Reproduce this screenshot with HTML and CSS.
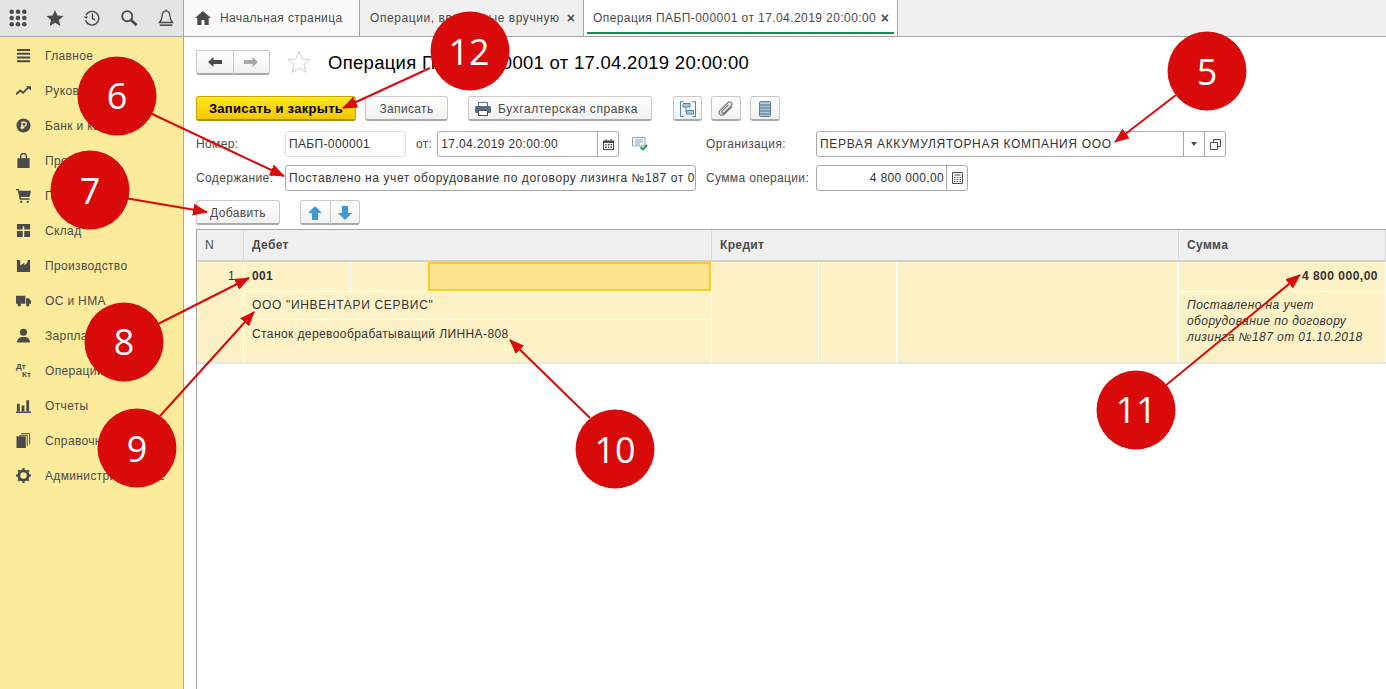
FILE: index.html
```html
<!DOCTYPE html>
<html lang="ru">
<head>
    <meta charset="UTF-8">
    <title>Операция ПАБП-000001</title>
    <link rel="stylesheet" href="styles.css">
</head>
<body>
    <div class="topbar">
        <div class="quick-panel">
            <svg class="quick-icon" width="18" height="18" viewBox="0 0 20 20" fill="#4a4a4a"><circle cx="3" cy="3" r="2.5"/><circle cx="10" cy="3" r="2.5"/><circle cx="17" cy="3" r="2.5"/><circle cx="3" cy="10" r="2.5"/><circle cx="10" cy="10" r="2.5"/><circle cx="17" cy="10" r="2.5"/><circle cx="3" cy="17" r="2.5"/><circle cx="10" cy="17" r="2.5"/><circle cx="17" cy="17" r="2.5"/></svg>
            <svg class="quick-icon" width="18" height="18" viewBox="0 0 20 20" fill="#4a4a4a"><path d="M10 1l2.700 6.200 6.800.6-5.100 4.500 1.500 6.700L10 15.400 4.100 19l1.500-6.700L.5 7.800l6.800-.6z"/></svg>
            <svg class="quick-icon" width="18" height="18" viewBox="0 0 20 20" fill="none" stroke="#4a4a4a" stroke-width="1.600"><path d="M3.200 7a7.600 7.600 0 1 1-.4 5.500"/><path d="M10.500 5v5.500l3 2"/><path d="M.6 8.200h5L3.600 11z" fill="#4a4a4a" stroke="none"/></svg>
            <svg class="quick-icon" width="18" height="18" viewBox="0 0 20 20" fill="none" stroke="#4a4a4a"><circle cx="8" cy="8" r="5.600" stroke-width="2"/><path d="M12 12l6.500 6" stroke-width="3"/></svg>
            <svg class="quick-icon" width="18" height="18" viewBox="0 0 20 20" fill="none" stroke="#4a4a4a" stroke-width="1.500"><path d="M10 2c-3.600 0-4.200 3-4.400 6-.2 3-1 5-2.800 7h14.400c-1.800-2-2.600-4-2.800-7-.2-3-.8-6-4.400-6z"/><path d="M3 18h14" stroke-width="1.800"/><circle cx="10" cy="1.500" r="1" fill="#4a4a4a" stroke="none"/></svg>
        </div>
        <div class="tab tab-home">
            <svg width="16" height="14" viewBox="0 0 16 14" fill="#4a4a4a"><path d="M8 0l8 7h-2.300v7H9.500V9h-3v5H2.300V7H0z"/></svg>
            <span>Начальная страница</span>
        </div>
        <div class="tab tab-list">
            <span>Операции, введенные вручную</span>
            <span class="tab-close">×</span>
        </div>
        <div class="tab tab-active">
            <span>Операция ПАБП-000001 от 17.04.2019 20:00:00</span>
            <span class="tab-close">×</span>
        </div>
    </div>

    <div class="workspace">
        <nav class="sidebar">
            <div class="nav-item">
                <svg viewBox="0 0 16 16" fill="#4a4a4a"><path d="M1 1h14v2.200H1zM1 5h14v2.200H1zM1 9h14v2.200H1zM1 13h14v2.200H1z"/></svg>
                <span>Главное</span>
            </div>
            <div class="nav-item">
                <svg viewBox="0 0 16 16" fill="none" stroke="#4a4a4a" stroke-width="2"><path d="M0 12l4.500-4 3 2.500L13 5"/><path d="M10.500 3.500H16V8z" stroke="none" fill="#4a4a4a"/></svg>
                <span>Руководителю</span>
            </div>
            <div class="nav-item">
                <svg viewBox="0 0 16 16"><circle cx="8" cy="8" r="7.500" fill="#4a4a4a"/><path d="M6.500 12V4.500h2.400a2 2 0 0 1 0 4.200H5M5 10.400h4" fill="none" stroke="#fbeb9b" stroke-width="1.400"/></svg>
                <span>Банк и касса</span>
            </div>
            <div class="nav-item">
                <svg viewBox="0 0 16 16" fill="#4a4a4a"><path d="M1.500 5.500h13V16h-13z"/><path d="M5 7V3.500a3 3 0 0 1 6 0V7" fill="none" stroke="#4a4a4a" stroke-width="1.500"/></svg>
                <span>Продажи</span>
            </div>
            <div class="nav-item">
                <svg viewBox="0 0 16 16" fill="#4a4a4a"><path d="M0 1h3l.6 2H16l-1.600 6.500H5l.4 1.500h9v1.500H4L1.900 2.500H0z"/><circle cx="5.500" cy="14.800" r="1.200"/><circle cx="12.500" cy="14.800" r="1.200"/></svg>
                <span>Покупки</span>
            </div>
            <div class="nav-item">
                <svg viewBox="0 0 16 16" fill="#4a4a4a"><path d="M1 1h14v6H8.800V3.500H7.200V7H1zM1 8.500h6.200V15H1zM8.800 8.500H15V15H8.800z"/></svg>
                <span>Склад</span>
            </div>
            <div class="nav-item">
                <svg viewBox="0 0 16 16" fill="#4a4a4a"><path d="M1 15V2h3.500v6L9 5v3l3-3 .5-3H15v13z"/></svg>
                <span>Производство</span>
            </div>
            <div class="nav-item">
                <svg viewBox="0 0 16 16" fill="#4a4a4a"><path d="M0 3h10v8.500H0zM10.800 5.500h3l2.200 3v3h-5.200z"/><circle cx="3.500" cy="12.500" r="1.800"/><circle cx="12.500" cy="12.500" r="1.800"/></svg>
                <span>ОС и НМА</span>
            </div>
            <div class="nav-item">
                <svg viewBox="0 0 16 16" fill="#4a4a4a"><circle cx="8" cy="4.500" r="3.800"/><path d="M1 15.500c0-3.500 2.500-5.500 4.500-6h5c2 .5 4.500 2.500 4.500 6z"/></svg>
                <span>Зарплата и кадры</span>
            </div>
            <div class="nav-item">
                <span class="dt-kt"><b>Дт</b><b class="kt">Кт</b></span>
                <span>Операции</span>
            </div>
            <div class="nav-item">
                <svg viewBox="0 0 16 16" fill="#4a4a4a"><path d="M1 6h3v8H1zM6 8h3v6H6zM11 2.500h3V14h-3zM0 14.500h16V16H0z"/></svg>
                <span>Отчеты</span>
            </div>
            <div class="nav-item">
                <svg viewBox="0 0 16 16" fill="#4a4a4a"><path d="M.5 3.500h10V16H.500z"/><path d="M12 2.500H3.500M12 2.500V14M14.500 .7H5.500M14.500 .7V12" fill="none" stroke="#4a4a4a"/></svg>
                <span>Справочники</span>
            </div>
            <div class="nav-item">
                <svg viewBox="0 0 16 16"><circle cx="8" cy="8" r="5" fill="none" stroke="#4a4a4a" stroke-width="3"/><path d="M8 0v16M0 8h16M2.300 2.300l11.400 11.400M13.700 2.300L2.300 13.700" stroke="#4a4a4a" stroke-width="2.200" stroke-dasharray="2.800 10.400 2.800 0"/></svg>
                <span>Администрирование</span>
            </div>
        </nav>

        <main class="form">
            <div class="title-row">
                <div class="btn-group nav-arrows">
                    <span class="btn">
                        <svg width="14" height="10" viewBox="0 0 14 10" fill="#4a4a4a"><path d="M0 5l5.500-5v3H14v4H5.500v3z"/></svg>
                    </span>
                    <span class="btn">
                        <svg width="14" height="10" viewBox="0 0 14 10" fill="#a8a8a8"><path d="M14 5L8.500 0v3H0v4h8.500v3z"/></svg>
                    </span>
                </div>
                <svg class="fav-star" width="24" height="24" viewBox="0 0 24 24" fill="none" stroke="#c9ced3"><path d="M12 1.500l3 7.400 8 .6-6.100 5.100 1.900 7.800L12 18.200l-6.800 4.200 1.900-7.800L1 9.500l8-.6z"/></svg>
                <h1>Операция ПАБП-000001 от 17.04.2019 20:00:00</h1>
            </div>

            <div class="toolbar">
                <span class="btn btn-primary">Записать и закрыть</span>
                <span class="btn btn-write">Записать</span>
                <span class="btn btn-report">
                    <svg width="16" height="14" viewBox="0 0 16 14"><path d="M3.500 .5h9v4h-9z" fill="#fff" stroke="#4f6f88"/><rect y="4" width="16" height="7" rx="1.500" fill="#4f6f88"/><path d="M3.500 8.500h9V13.500h-9z" fill="#fff" stroke="#4a4a4a"/></svg>
                    Бухгалтерская справка
                </span>
                <span class="btn btn-icon btn-struct">
                    <svg width="16" height="16" viewBox="0 0 16 16" fill="none" stroke="#4f86b0"><path d="M3.500 .5H.5v15h3M12.500 .5h3v15h-3"/><path d="M3 2.500h7v3.500H3zM6.500 9.500h7V13h-7z" fill="#a9c8de"/><path d="M6 6v5"/></svg>
                </span>
                <span class="btn btn-icon">
                    <svg width="16" height="16" viewBox="0 0 16 16" fill="none" stroke="#7d7d7d" stroke-width="1.300"><path d="M14 5.500L6.500 13c-1.500 1.500-3.500 1.500-4.500.500s-1-3 .500-4.500L9.500 2c1.300-1.300 2.800-1.300 3.700-.4s.9 2.400-.4 3.700L6.500 11.500c-.8.800-1.700.8-2.200.3s-.5-1.400.3-2.200L10.500 3.700"/></svg>
                </span>
                <span class="btn btn-icon">
                    <svg width="12" height="16" viewBox="0 0 12 16"><rect x=".5" y=".5" width="11" height="15" rx="1" fill="#a9c8de" stroke="#5f8199"/><path d="M.5 4h11M.5 7h11M.5 10h11M.5 13h11" stroke="#4f6f88"/></svg>
                </span>
            </div>

            <div class="field-grid">
                <label>Номер:</label>
                <div class="number-cell">
                    <div class="field field-number">ПАБП-000001</div>
                    <label class="from-label">от:</label>
                    <div class="field field-date">
                        <span class="field-text">17.04.2019 20:00:00</span>
                        <span class="field-btn">
                            <svg width="11" height="11" viewBox="0 0 11 11" fill="#4a4a4a"><path d="M0 1.500h11V11H0zM1 4v6h9V4z"/><path d="M2.500 0h1v2h-1zM7.500 0h1v2h-1zM2 5h1.500v1.500H2zM4.800 5h1.500v1.500H4.800zM7.500 5H9v1.500H7.500zM2 7.500h1.500V9H2zM4.800 7.500h1.500V9H4.800zM7.500 7.500H9V9H7.500z"/></svg>
                        </span>
                    </div>
                    <svg class="posted-icon" width="16" height="14" viewBox="0 0 16 14" fill="none"><path d="M.5.5h12.500v8.500H.5z" fill="#f4f7f9" stroke="#8fa8b8"/><path d="M3 3h8M3 5h8M3 7h5" stroke="#8fa8b8"/><path d="M8.500 10l2.500 2.500 4-4.500" stroke="#2f9e44" stroke-width="2"/></svg>
                </div>
                <label class="second-label">Организация:</label>
                <div class="field field-org">
                    <span class="field-text wide-text">ПЕРВАЯ АККУМУЛЯТОРНАЯ КОМПАНИЯ ООО</span>
                    <span class="field-btn btn-drop"><i class="caret"></i></span>
                    <span class="field-btn btn-open">
                        <svg width="11" height="11" viewBox="0 0 11 11" fill="none" stroke="#4a4a4a"><path d="M3.500 3V.5h7v7H8"/><path d="M.5 3.500h7v7h-7z"/></svg>
                    </span>
                </div>

                <label>Содержание:</label>
                <div class="field field-content">
                    <span class="field-text content-text">Поставлено на учет оборудование по договору лизинга №187 от 01.10.2018</span>
                </div>
                <label class="second-label">Сумма операции:</label>
                <div class="field field-sum">
                    <span class="field-text amount">4 800 000,00</span>
                    <span class="field-btn">
                        <svg width="11" height="12" viewBox="0 0 11 12" fill="none" stroke="#4a4a4a"><path d="M.5.5h10v11H.5zM2.500 3h6"/><path d="M2 5.500h7M2 7.500h7M2 9.500h7" stroke-dasharray="1.500 1.250"/></svg>
                    </span>
                </div>
            </div>

            <div class="table-tools">
                <span class="btn btn-add">Добавить</span>
                <div class="btn-group move-arrows">
                    <span class="btn">
                        <svg width="14" height="14" viewBox="0 0 14 14" fill="#3d9ad6"><path d="M7 0l7 7H10v7H4V7H0z"/></svg>
                    </span>
                    <span class="btn">
                        <svg width="14" height="14" viewBox="0 0 14 14" fill="#3d9ad6"><path d="M7 14l7-7H10V0H4v7H0z"/></svg>
                    </span>
                </div>
            </div>

            <div class="grid">
                <div class="grid-head">
                    <div>N</div>
                    <div>Дебет</div>
                    <div>Кредит</div>
                    <div>Сумма</div>
                </div>
                <div class="grid-row">
                    <div class="col-n">1</div>
                    <div class="col-entry">
                        <div class="subcells">
                            <div class="strong">001</div>
                            <div></div>
                            <div class="cell-current"></div>
                        </div>
                        <div class="line-org">ООО "ИНВЕНТАРИ СЕРВИС"</div>
                        <div class="line-asset">Станок деревообрабатыващий ЛИННА-808</div>
                    </div>
                    <div class="col-entry">
                        <div class="subcells subcells-full">
                            <div></div>
                            <div></div>
                            <div></div>
                        </div>
                    </div>
                    <div class="col-sum">
                        <div class="sum-value">4 800 000,00</div>
                        <div class="sum-note">Поставлено на учет оборудование по договору лизинга №187 от 01.10.2018</div>
                    </div>
                </div>
            </div>
        </main>
    </div>

    <svg class="callouts" width="1386" height="689" viewBox="0 0 1386 689">
        <defs>
            <marker id="head" markerWidth="15" markerHeight="12" refX="14" refY="6" orient="auto" markerUnits="userSpaceOnUse">
                <path d="M0 0L15 6L0 12z" fill="#d80a0a"/>
            </marker>
        </defs>
        <g class="callout-lines">
            <line x1="430" y1="68" x2="343" y2="108" marker-end="url(#head)"/>
            <line x1="1176" y1="95" x2="1115" y2="142" marker-end="url(#head)"/>
            <line x1="150" y1="113" x2="284" y2="176" marker-end="url(#head)"/>
            <line x1="125" y1="198" x2="207" y2="212" marker-end="url(#head)"/>
            <line x1="158" y1="324" x2="249" y2="278" marker-end="url(#head)"/>
            <line x1="160" y1="416" x2="254" y2="312" marker-end="url(#head)"/>
            <line x1="590" y1="418" x2="510" y2="340" marker-end="url(#head)"/>
            <line x1="1165" y1="386" x2="1300" y2="275" marker-end="url(#head)"/>
        </g>
        <g class="callout-dots">
            <circle cx="470" cy="51" r="39.500"/>
            <circle cx="1207" cy="71" r="39.500"/>
            <circle cx="117" cy="96" r="39.500"/>
            <circle cx="90" cy="190" r="39.500"/>
            <circle cx="124" cy="342" r="39.500"/>
            <circle cx="137" cy="448" r="39.500"/>
            <circle cx="615" cy="449" r="39.500"/>
            <circle cx="1136" cy="410" r="39.500"/>
        </g>
        <g class="callout-nums">
            <text x="469" y="65">12</text>
            <text x="1207" y="85">5</text>
            <text x="117" y="109">6</text>
            <text x="90" y="204">7</text>
            <text x="124" y="355">8</text>
            <text x="137" y="462">9</text>
            <text x="615" y="463">10</text>
            <text x="1136" y="423">11</text>
        </g>
    </svg>
</body>
</html>
```

FILE: styles.css
```css
* {
    box-sizing: border-box;
}
body {
    margin: 0;
    width: 1386px;
    height: 689px;
    overflow: hidden;
    position: relative;
    background: #fff;
    color: #4a4a4a;
    font-family: "Liberation Sans", Arial, sans-serif;
    font-size: 12px;
    letter-spacing: 0.35px;
}

/* top bar */
.topbar {
    display: flex;
    height: 37px;
    background: #f0f0f0;
    border-bottom: 1px solid #a5a5a5;
}
.quick-panel {
    width: 184px;
    display: flex;
    align-items: center;
    gap: 19px;
    padding-left: 9px;
    background: #e4e4e4;
    border-right: 1px solid #a5a5a5;
}
.quick-icon {
    flex: none;
}
.tab {
    display: flex;
    align-items: center;
    height: 36px;
    border-right: 1px solid #a5a5a5;
}
.tab-home {
    width: 176px;
    gap: 9px;
    padding-left: 11px;
    background: #fafafa;
}
.tab-list {
    width: 224px;
    justify-content: space-between;
    padding: 0 8px 0 10px;
    letter-spacing: 0.57px;
}
.tab-active {
    width: 314px;
    justify-content: space-between;
    padding: 0 8px 0 9px;
    background: #fff;
    position: relative;
    letter-spacing: 0.42px;
}
.tab-active::after {
    content: "";
    position: absolute;
    left: 3px;
    right: 3px;
    bottom: 2px;
    height: 2px;
    background: #0d8f4f;
}
.tab-close {
    font-size: 14px;
    font-weight: bold;
    letter-spacing: 0;
}

.workspace {
    display: flex;
    height: 652px;
}

/* left menu */
.sidebar {
    width: 184px;
    flex: none;
    padding-top: 1px;
    background: #fbeb9b;
    border-right: 1px solid #a5a5a5;
}
.nav-item {
    display: flex;
    align-items: center;
    gap: 14px;
    height: 35px;
    padding-left: 16px;
}
.nav-item svg {
    width: 15px;
    height: 15px;
    flex: none;
}
.dt-kt {
    width: 15px;
    flex: none;
    display: flex;
    flex-direction: column;
    font-size: 8px;
    line-height: 8px;
    letter-spacing: 0;
}
.dt-kt .kt {
    margin-left: 6px;
}

/* form */
.form {
    flex: 1;
    min-width: 0;
    padding: 13px 0 0 12px;
}
.title-row {
    display: flex;
    align-items: center;
    height: 24px;
}
.nav-arrows {
    width: 74px;
}
.fav-star {
    margin-left: 17px;
}
h1 {
    margin: 2px 0 0 17px;
    font-size: 18.5px;
    font-weight: normal;
    color: #000;
    letter-spacing: 0.29px;
}
.btn {
    display: inline-flex;
    align-items: center;
    justify-content: center;
    height: 25px;
    padding-top: 1px;
    background: linear-gradient(#fff, #f1f1f1);
    border: 1px solid #c9c9c9;
    border-bottom: 2px solid #a9a9a9;
    border-radius: 3px;
    white-space: nowrap;
}
.btn-group {
    display: flex;
}
.btn-group .btn {
    flex: 1;
}
.btn-group .btn:first-child {
    border-right: 0;
    border-radius: 3px 0 0 3px;
}
.btn-group .btn:last-child {
    border-radius: 0 3px 3px 0;
}
.toolbar {
    display: flex;
    margin-top: 22px;
    height: 26px;
}
.btn-primary {
    width: 160px;
    font-size: 13px;
    font-weight: bold;
    letter-spacing: 0.3px;
    color: #000;
    background: linear-gradient(#ffe920, #f6c600);
    border-color: #c9a800;
    border-bottom-color: #a89000;
}
.btn-write {
    width: 83px;
    margin-left: 9px;
}
.btn-report {
    width: 184px;
    margin-left: 20px;
    justify-content: flex-start;
    padding-left: 6px;
    gap: 7px;
    letter-spacing: 0.55px;
}
.btn-icon {
    width: 30px;
    margin-left: 9px;
}
.btn-struct {
    width: 29px;
    margin-left: 21px;
}
.field-grid {
    display: grid;
    grid-template-columns: 89px 411px 120px 410px;
    grid-auto-rows: 26px;
    row-gap: 8px;
    margin-top: 9px;
    align-items: center;
}
.field-grid label {
    white-space: nowrap;
}
.second-label {
    padding-left: 10px;
}
.number-cell {
    display: flex;
    align-items: center;
}
.from-label {
    margin: 0 5px 0 10px;
}
.field {
    display: flex;
    height: 26px;
    background: #fff;
    border: 1px solid #a8a8a8;
    border-radius: 3px;
    line-height: 24px;
    color: #333;
}
.field-text {
    flex: 1;
    min-width: 0;
    padding-left: 3px;
    overflow: hidden;
    white-space: nowrap;
}
.wide-text {
    letter-spacing: 0.68px;
}
.content-text {
    letter-spacing: 0.58px;
}
.field-btn {
    width: 21px;
    flex: none;
    display: flex;
    align-items: center;
    justify-content: center;
    border-left: 1px solid #a8a8a8;
}
.field-number {
    width: 121px;
    padding-left: 3px;
    border-color: #dedede;
}
.field-date {
    width: 182px;
}
.posted-icon {
    margin-left: 13px;
}
.field-sum {
    width: 152px;
}
.amount {
    text-align: right;
    padding-right: 2px;
}
.caret {
    border: 3px solid transparent;
    border-top: 4px solid #4a4a4a;
    border-bottom: 0;
}
.table-tools {
    display: flex;
    margin-top: 9px;
    height: 26px;
}
.btn-add {
    width: 84px;
}
.move-arrows {
    width: 60px;
    margin-left: 20px;
}

/* table */
.grid {
    height: 460px;
    margin-top: 3px;
    border-top: 1px solid #a5a5a5;
    border-left: 1px solid #a5a5a5;
}
.grid-head,
.grid-row {
    display: grid;
    grid-template-columns: 47px 468px 467px 1fr;
}
.grid-head {
    height: 32px;
    background: #f0f0f0;
    border-bottom: 2px solid #d2d2d2;
    line-height: 30px;
    font-weight: bold;
}
.grid-head div {
    padding-left: 8px;
    border-right: 1px solid #d8d8d8;
}
.grid-head div:first-child {
    font-weight: normal;
}
.grid-row {
    height: 102px;
    background: #fdf1c6;
    border-bottom: 2px solid #e6e6e6;
    color: #333;
}
.col-n {
    padding: 7px 8px 0 0;
    text-align: right;
    border-right: 1px solid #fff;
}
.col-entry,
.col-sum {
    border-right: 1px solid #fff;
}
.subcells {
    display: grid;
    grid-template-columns: 107px 78px 1fr;
    height: 30px;
    border-bottom: 1px solid #fff;
}
.subcells div {
    border-right: 1px solid #fff;
}
.subcells-full {
    height: 100%;
    border-bottom: 0;
}
.strong {
    padding: 7px 0 0 8px;
    font-weight: bold;
}
.subcells .cell-current {
    background: #ffe48e;
    border: 2px solid #fcc827;
    margin-left: -1px;
}
.line-org {
    height: 28px;
    padding: 6px 0 0 8px;
    border-bottom: 1px solid #fff;
    letter-spacing: 0.67px;
}
.line-asset {
    padding: 7px 0 0 8px;
    letter-spacing: 0.41px;
}
.sum-value {
    height: 30px;
    padding: 7px 7px 0 0;
    text-align: right;
    font-weight: bold;
    border-bottom: 1px solid #fff;
    letter-spacing: 0.5px;
}
.sum-note {
    padding: 5px 8px 0;
    font-style: italic;
    line-height: 16px;
    letter-spacing: 0.43px;
}

/* numbered callouts over the screenshot */
.callouts {
    position: absolute;
    left: 0;
    top: 0;
    pointer-events: none;
}
.callout-lines {
    stroke: #d80a0a;
    stroke-width: 2;
}
.callout-dots {
    fill: #d80a0a;
}
.callout-nums {
    fill: #fff;
    font-family: "Open Sans", sans-serif;
    font-size: 36px;
    text-anchor: middle;
    letter-spacing: 0;
}
```
